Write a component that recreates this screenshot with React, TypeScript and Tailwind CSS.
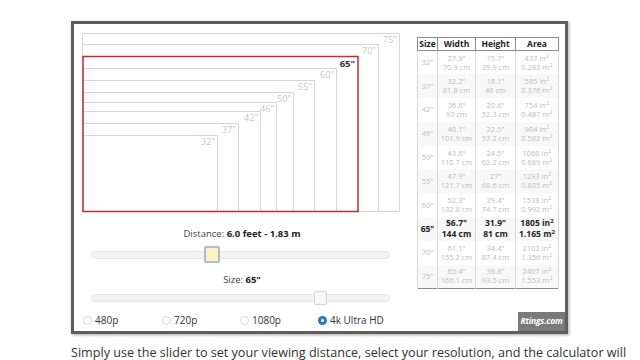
import React from "react";

const sizes = [75, 70, 65, 60, 55, 50, 46, 42, 37, 32];

const rows = [
  { s: '32"', w: '27.9"', wc: "70.9 cm", h: '15.7"', hc: "39.9 cm", a: "437", am: "0.283" },
  { s: '37"', w: '32.2"', wc: "81.8 cm", h: '18.1"', hc: "46 cm", a: "585", am: "0.376" },
  { s: '42"', w: '36.6"', wc: "93 cm", h: '20.6"', hc: "52.3 cm", a: "754", am: "0.487" },
  { s: '46"', w: '40.1"', wc: "101.9 cm", h: '22.5"', hc: "57.2 cm", a: "904", am: "0.582" },
  { s: '50"', w: '43.6"', wc: "110.7 cm", h: '24.5"', hc: "62.2 cm", a: "1068", am: "0.689" },
  { s: '55"', w: '47.9"', wc: "121.7 cm", h: '27"', hc: "68.6 cm", a: "1293", am: "0.835" },
  { s: '60"', w: '52.3"', wc: "132.8 cm", h: '29.4"', hc: "74.7 cm", a: "1538", am: "0.992" },
  { s: '65"', w: '56.7"', wc: "144 cm", h: '31.9"', hc: "81 cm", a: "1805", am: "1.165", on: true },
  { s: '70"', w: '61.1"', wc: "155.2 cm", h: '34.4"', hc: "87.4 cm", a: "2102", am: "1.356" },
  { s: '75"', w: '65.4"', wc: "166.1 cm", h: '36.8"', hc: "93.5 cm", a: "2407", am: "1.553" },
];

function Diagram() {
  // 75" = 317px wide, all screens share bottom-left corner
  const k = 317 / 75;
  const H = 180;
  return (
    <svg width="320" height={H} viewBox={`0 0 320 ${H}`} className="block">
      {sizes.map((s) => {
        const w = Math.round(s * k);
        const h = Math.round((w * 9) / 16);
        if (s === 65) return null;
        return (
          <g key={s}>
            <rect x="0.5" y={H - 1.5 - h} width={w} height={h} fill="none" stroke="#d6d6d6" strokeWidth="1" />
            <text x={w - 2} y={H - 1.5 - h + 9} textAnchor="end" fontSize="9" fill="#c6c6c6" fontFamily="Open Sans, sans-serif">
              {s}"
            </text>
          </g>
        );
      })}
      <g>
        <rect x="1" y={H - 1.5 - 155} width="275" height="155" fill="none" stroke="#c42a32" strokeWidth="1.5" />
        <text x="273" y={H - 1.5 - 155 + 10} textAnchor="end" fontSize="9.5" fontWeight="700" fill="#333" fontFamily="Open Sans, sans-serif">
          65"
        </text>
      </g>
    </svg>
  );
}

function Radio({ label, on }: { label: string; on?: boolean }) {
  return (
    <div className="flex items-center gap-[3px]">
      {on ? (
        <span className="w-[9px] h-[9px] rounded-full bg-[#2b78c9] flex items-center justify-center">
          <span className="w-[3px] h-[3px] rounded-full bg-white" />
        </span>
      ) : (
        <span className="w-[9px] h-[9px] rounded-full border border-[#d8d8d8] bg-white" />
      )}
      <span className="text-[10px] leading-[14px] text-[#333]">{label}</span>
    </div>
  );
}

export default function App() {
  return (
    <div className="w-[640px] h-[360px] overflow-hidden bg-white font-['Open_Sans',sans-serif]">
      <div className="ml-[71px] mt-[21px] w-[497px] h-[313px] border-[3px] border-[#5e5e5e] shadow-[1px_1px_3px_rgba(0,0,0,0.35)] flex bg-white">
        {/* LEFT: diagram + sliders */}
        <div className="w-[336px] flex flex-col">
          <div className="pl-[8px] pt-[9px]">
            <Diagram />
          </div>
          <p className="mt-[15px] text-center text-[9.5px] text-[#444] leading-[12px]">
            Distance: <b className="text-[#222]">6.0 feet - 1.83 m</b>
          </p>
          <div className="relative ml-[17px] mt-[11px] w-[299px] h-[8px] rounded-full bg-[#f3f3f3] border border-[#e6e6e6]">
            <div className="absolute left-[112px] top-[-6px] w-[16px] h-[17px] rounded-[2px] bg-[#fbf3c6] border-2 border-[#a9bed0]" />
          </div>
          <p className="mt-[15px] text-center text-[9.5px] text-[#444] leading-[12px]">
            Size: <b className="text-[#222]">65"</b>
          </p>
          <div className="relative ml-[17px] mt-[8px] w-[299px] h-[8px] rounded-full bg-[#f3f3f3] border border-[#e6e6e6]">
            <div className="absolute left-[222px] top-[-4px] w-[13px] h-[14px] rounded-[2px] bg-[#f7f7f7] border border-[#d2d2d2]" />
          </div>
          <div className="mt-[11px] ml-[9px] flex">
            <div className="w-[79px]"><Radio label="480p" /></div>
            <div className="w-[78px]"><Radio label="720p" /></div>
            <div className="w-[78px]"><Radio label="1080p" /></div>
            <Radio label="4k Ultra HD" on />
          </div>
        </div>

        {/* RIGHT: table + badge */}
        <div className="flex-1 flex flex-col justify-between">
          <table className="ml-[7px] mt-[13px] w-[141px] border-collapse border border-[#8c8c8c] text-center table-fixed">
            <colgroup>
              <col className="w-[20px]" />
              <col className="w-[38px]" />
              <col className="w-[40px]" />
              <col className="w-[43px]" />
            </colgroup>
            <thead>
              <tr className="h-[13px] text-[8.5px] font-bold text-[#222] leading-[12px]">
                <th className="border border-[#8c8c8c] p-0">Size</th>
                <th className="border border-[#8c8c8c] p-0">Width</th>
                <th className="border border-[#8c8c8c] p-0">Height</th>
                <th className="border border-[#8c8c8c] p-0">Area</th>
              </tr>
            </thead>
            <tbody>
              {rows.map((r, i) => (
                <tr
                  key={r.s}
                  className={
                    "h-[23.8px] " +
                    (r.on ? "text-[8.5px] leading-[10.5px] font-bold text-[#222] " : "text-[7.5px] leading-[9px] text-[#bdbdbd] ") +
                    (i % 2 === 1 ? "bg-[#f8f8f8]" : "bg-white")
                  }
                >
                  <td className="border-x border-[#d8d8d8] p-0">{r.s}</td>
                  <td className="border-x border-[#d8d8d8] p-0">
                    {r.w}
                    <br />
                    {r.wc}
                  </td>
                  <td className="border-x border-[#d8d8d8] p-0">
                    {r.h}
                    <br />
                    {r.hc}
                  </td>
                  <td className="border-x border-[#d8d8d8] p-0">
                    {r.a} in<sup className="text-[6px] leading-none">2</sup>
                    <br />
                    {r.am} m<sup className="text-[6px] leading-none">2</sup>
                  </td>
                </tr>
              ))}
            </tbody>
          </table>
          <div className="self-end w-[47px] h-[19px] bg-[#7a7a7a] flex items-center justify-center">
            <span className="text-[8.5px] italic font-bold text-white tracking-tight">Rtings.com</span>
          </div>
        </div>
      </div>
      <p className="ml-[71px] mt-[10px] text-[12.6px] leading-[18px] text-[#333] whitespace-nowrap">
        Simply use the slider to set your viewing distance, select your resolution, and the calculator will
      </p>
    </div>
  );
}
